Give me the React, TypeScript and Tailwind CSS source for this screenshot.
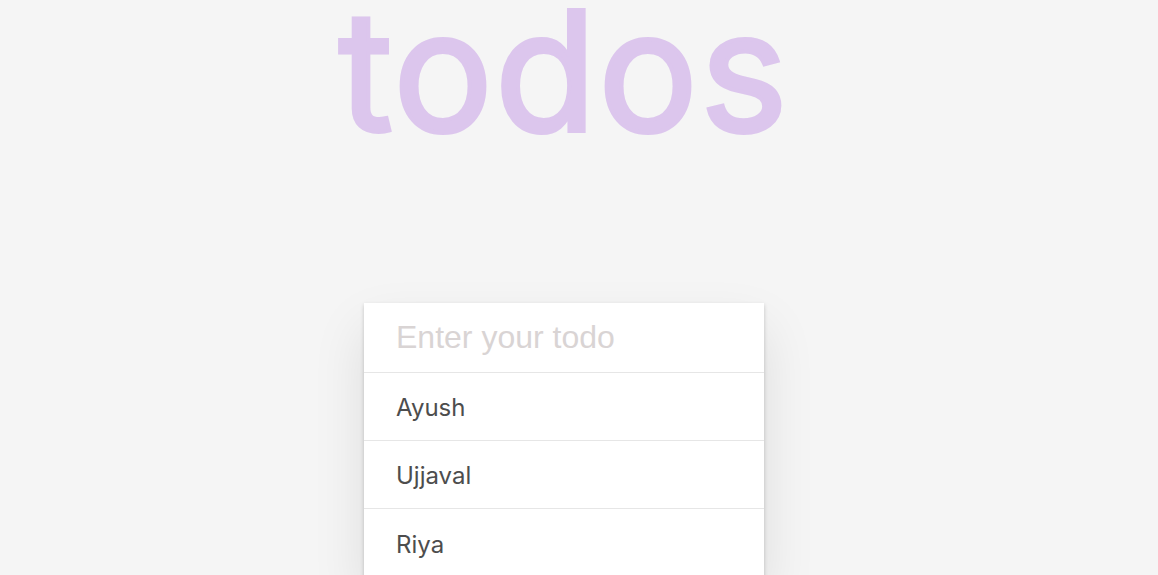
import { useState } from 'react';

export default function App() {
  const [todos] = useState(['Ayush', 'Ujjaval', 'Riya']);
  const [text, setText] = useState('');

  return (
    <div className="min-h-screen bg-[#f5f5f5] overflow-hidden">
      <div className="w-[1128px] flex flex-col items-center">
        <h1
          className="mt-[6px] text-[166px] leading-[130px] font-normal tracking-[2px] text-[#dcc6ed] [-webkit-text-stroke:4px_#dcc6ed] select-none"
          style={{ fontFamily: 'Inter, "Noto Sans", sans-serif' }}
        >
          todos
        </h1>

        <div className="mt-[167px] w-[400px] bg-white shadow-[0_2px_4px_rgba(0,0,0,0.2),0_25px_50px_rgba(0,0,0,0.1)]">
          <input
            value={text}
            onChange={e => setText(e.target.value)}
            placeholder="Enter your todo"
            className="block w-full h-[70px] px-8 text-[32px] text-[#4d4d4d] placeholder:text-[#d9d4d4] outline-none border-b border-[#e6e6e6]"
            style={{ fontFamily: '"Liberation Sans", Arial, sans-serif' }}
          />
          <ul>
            {todos.map((todo, i) => (
              <li
                key={i}
                className="h-[68px] flex items-center px-8 pt-[3px] text-[24px] text-[#4d4d4d] border-b border-[#e6e6e6] last:border-b-0"
                style={{ fontFamily: 'Inter, "Noto Sans", sans-serif' }}
              >
                {todo}
              </li>
            ))}
          </ul>
        </div>
      </div>
    </div>
  );
}
